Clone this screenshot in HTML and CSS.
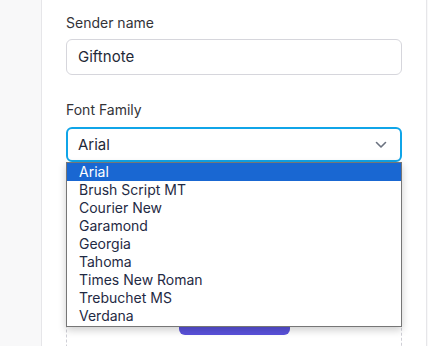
FILE: index.html
```html
<!DOCTYPE html>
<html lang="en">
<head>
    <meta charset="UTF-8">
    <meta name="viewport" content="width=device-width, initial-scale=1.0">
    <title>Card settings</title>
    <link rel="stylesheet" href="styles.css">
</head>
<body>
    <div class="card">
        <div class="field">
            <label class="label">Sender name</label>
            <div class="input">Giftnote</div>
        </div>

        <div class="field select-field">
            <label class="label">Font Family</label>
            <div class="select">
                <span>Arial</span>
                <svg class="chevron" width="12" height="8" viewBox="0 0 12 8">
                    <path d="M1.5 1.5 L6 6 L10.5 1.5" fill="none" stroke="#6b7280" stroke-width="1.6" stroke-linecap="round" stroke-linejoin="round"/>
                </svg>
            </div>

            <!-- open option list sits over the upload box -->
            <div class="options">
                <div class="option active">Arial</div>
                <div class="option">Brush Script MT</div>
                <div class="option">Courier New</div>
                <div class="option">Garamond</div>
                <div class="option">Georgia</div>
                <div class="option">Tahoma</div>
                <div class="option">Times New Roman</div>
                <div class="option">Trebuchet MS</div>
                <div class="option">Verdana</div>
            </div>
        </div>

        <div class="upload">
            <button class="upload-btn">Upload image</button>
        </div>
    </div>
</body>
</html>
```

FILE: styles.css
```css
body {
    margin: 0;
    background: #f8f8f9;
    font-family: Inter, "Noto Sans", sans-serif;
    overflow: hidden;
}

.card {
    margin-left: 41px;
    width: 386px;
    height: 346px;
    box-sizing: border-box;
    background: #ffffff;
    border-left: 1px solid #e6e6e9;
    border-right: 1px solid #e6e6e9;
    padding: 13px 24px 0 24px;
    overflow: hidden;
}

.field {
    display: flex;
    flex-direction: column;
}

.label {
    font-size: 14px;
    line-height: 20px;
    color: #333338;
    margin-bottom: 6px;
}

.input {
    height: 36px;
    box-sizing: border-box;
    border: 1px solid #d6d6dc;
    border-radius: 6px;
    padding: 0 11px;
    font-size: 15px;
    line-height: 34px;
    color: #1f2937;
}

.select-field {
    position: relative;
    margin-top: 25px;
}

.select-field .label {
    margin-bottom: 7px;
}

.select {
    height: 35px;
    box-sizing: border-box;
    border: 2px solid #10a5e8;
    border-radius: 6px;
    padding: 0 12px 0 10px;
    display: flex;
    align-items: center;
    justify-content: space-between;
    font-size: 15px;
    color: #1f2937;
}

.chevron {
    margin-right: 1px;
}

.options {
    position: absolute;
    left: 0;
    right: 0;
    top: 62px;
    padding-bottom: 1px;
    background: #ffffff;
    border: 1px solid #767676;
    box-shadow: 0 3px 8px rgba(0, 0, 0, 0.2);
    z-index: 2;
}

.option {
    height: 18px;
    line-height: 18px;
    padding-left: 12px;
    font-size: 14px;
    color: #1f2a44;
}

.option.active {
    background: #1967d2;
    color: #ffffff;
}

.upload {
    margin-top: 23px;
    height: 200px;
    border: 1px dashed #cfcfd6;
    border-radius: 6px;
    display: flex;
    justify-content: center;
    padding-top: 117px;
    box-sizing: border-box;
}

.upload-btn {
    width: 111px;
    height: 32px;
    border: none;
    border-radius: 6px;
    background: #5a52dc;
    color: #ffffff;
    font-family: Inter, sans-serif;
    font-size: 13px;
}
```
